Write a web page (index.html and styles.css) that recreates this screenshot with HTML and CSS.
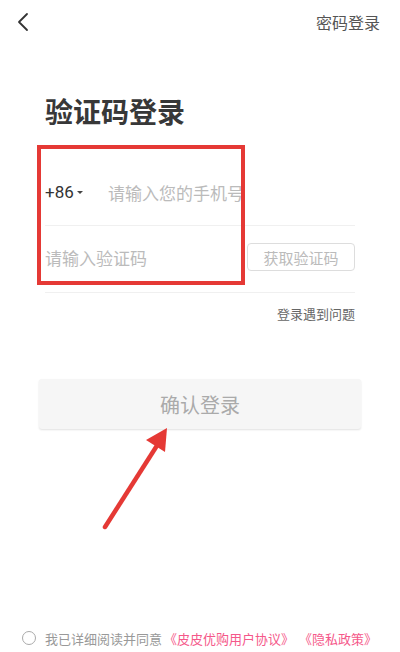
FILE: index.html
```html
<!DOCTYPE html>
<html lang="zh-CN">
<head>
  <meta charset="UTF-8">
  <title>验证码登录</title>
  <link rel="stylesheet" href="styles.css">
</head>
<body>

<div class="page">
  <div class="top-bar">
    <svg class="back" width="12" height="20" viewBox="0 0 12 20">
      <path d="M10 2 L2 10 L10 18" fill="none" stroke="#333" stroke-width="1.8" stroke-linecap="round" stroke-linejoin="round"/>
    </svg>
    <span class="switch">密码登录</span>
  </div>

  <h1 class="title">验证码登录</h1>

  <div class="form">
    <div class="row">
      <span class="code">+86<span class="caret"></span></span>
      <span class="placeholder phone">请输入您的手机号</span>
    </div>
    <div class="row row-code">
      <span class="placeholder">请输入验证码</span>
      <span class="get-code">获取验证码</span>
    </div>
    <div class="help">登录遇到问题</div>
  </div>

  <div class="submit">确认登录</div>

  <div class="agree">
    <span class="radio"></span>
    <span>我已详细阅读并同意</span>
    <span class="link">《皮皮优购用户协议》</span>
    <span class="link gap">《隐私政策》</span>
  </div>

  <!-- 标注 -->
  <div class="mark-box"></div>
  <svg class="mark-arrow" width="80" height="110" viewBox="0 0 80 110">
    <line x1="15" y1="107" x2="68" y2="24" stroke="#e53935" stroke-width="4.5" stroke-linecap="round"/>
    <polygon points="77,8 56,20 75,32" fill="#e53935"/>
  </svg>
</div>

</body>
</html>
```

FILE: styles.css
```css
* {
  box-sizing: border-box;
}
body {
  margin: 0;
  background: #fff;
  font-family: "Noto Sans CJK SC", "Noto Sans", sans-serif;
  color: #333;
}
.page {
  position: relative;
  width: 400px;
  height: 652px;
  overflow: hidden;
}
.top-bar {
  height: 44px;
  display: flex;
  align-items: center;
  justify-content: space-between;
  padding: 0 20px 0 17px;
}
.back {
  display: block;
}
.switch {
  font-size: 16px;
  color: #555;
}
.title {
  margin: 47px 0 0 45px;
  font-size: 28px;
  line-height: 40px;
  font-weight: bold;
  color: #383838;
}
.form {
  margin: 28px 45px 0;
}
.row {
  height: 67px;
  display: flex;
  align-items: center;
  border-bottom: 1px solid #f0f0f0;
}
.row-code {
  padding-bottom: 4px;
}
.code {
  font-family: "Roboto", "Noto Sans", sans-serif;
  font-size: 17px;
  color: #333;
  display: flex;
  align-items: center;
  width: 63px;
}
.caret {
  width: 0;
  height: 0;
  margin-left: 3px;
  border-left: 3px solid transparent;
  border-right: 3px solid transparent;
  border-top: 3px solid #444;
}
.placeholder {
  font-size: 17px;
  color: #bbb;
  flex: 1;
}
.phone {
  white-space: nowrap;
}
.get-code {
  width: 108px;
  height: 28px;
  border: 1px solid #ddd;
  border-radius: 4px;
  font-size: 15px;
  color: #bbb;
  display: flex;
  align-items: center;
  justify-content: center;
}
.help {
  text-align: right;
  font-size: 13px;
  color: #666;
  margin-top: 11px;
}
.submit {
  margin: 56px 39px 0;
  height: 50px;
  background: #f6f6f6;
  border-radius: 3px;
  box-shadow: 0 1px 2px rgba(0, 0, 0, 0.12);
  font-size: 20px;
  color: #aaa;
  display: flex;
  align-items: center;
  justify-content: center;
}
.agree {
  position: absolute;
  left: 22px;
  bottom: 6px;
  display: flex;
  align-items: center;
  font-size: 13px;
  color: #999;
  height: 16px;
}
.radio {
  width: 14px;
  height: 14px;
  border: 1px solid #aaa;
  border-radius: 50%;
  margin-right: 9px;
}
.link {
  color: #f5588a;
  margin-left: 2px;
}
.gap {
  margin-left: 5px;
}
.mark-box {
  position: absolute;
  left: 37px;
  top: 145px;
  width: 208px;
  height: 140px;
  border: 4px solid #e53935;
}
.mark-arrow {
  position: absolute;
  left: 90px;
  top: 420px;
}
```
